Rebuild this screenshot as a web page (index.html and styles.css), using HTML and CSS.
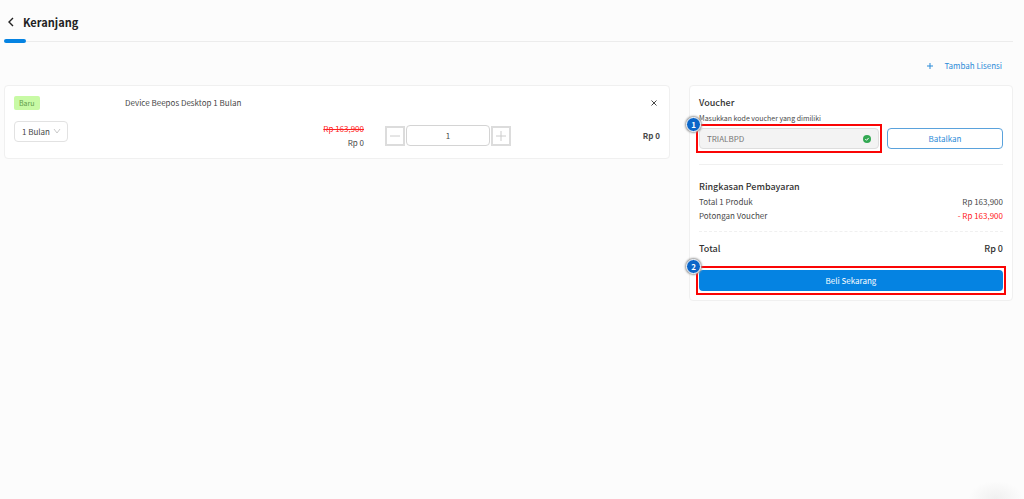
FILE: index.html
```html
<!DOCTYPE html>
<html lang="id">
<head>
<meta charset="utf-8">
<meta name="viewport" content="width=device-width, initial-scale=1">
<title>Keranjang</title>
<link rel="stylesheet" href="styles.css">
</head>
<body>
<header class="header">
  <button class="back" type="button" aria-label="Kembali"><svg viewBox="0 0 8 10" width="8" height="10"><path d="M6 1 2 5l4 4"/></svg></button>
  <h1 class="title">Keranjang</h1>
</header>
<main>
  <div class="toolbar">
    <a class="add-link" href="#"><svg viewBox="0 0 8 8" width="8" height="8"><path d="M4 1v6M1 4h6"/></svg><span>Tambah Lisensi</span></a>
  </div>
  <div class="layout">
    <section class="card item">
      <div class="item-top">
        <div><span class="tag">Baru</span></div>
        <span class="name">Device Beepos Desktop 1 Bulan</span>
        <button class="remove" type="button" aria-label="Hapus"><svg viewBox="0 0 8 8" width="8" height="8"><path d="M1.500 1.500l5 5M6.500 1.500l-5 5"/></svg></button>
      </div>
      <div class="item-bottom">
        <div class="select">
          <select aria-label="Durasi"><option>1 Bulan</option></select>
          <svg class="chevron" viewBox="0 0 8 6" width="8" height="6"><path d="M1 1l3 4 3-4"/></svg>
        </div>
        <div class="prices"><del>Rp 163,900</del><span>Rp 0</span></div>
        <div class="qty">
          <button type="button" aria-label="Kurangi"><svg viewBox="0 0 12 12" width="12" height="12"><path d="M1 6h10"/></svg></button>
          <input type="text" value="1" aria-label="Jumlah">
          <button type="button" aria-label="Tambah"><svg viewBox="0 0 12 12" width="12" height="12"><path d="M1 6h10M6 1v10"/></svg></button>
        </div>
        <strong class="subtotal">Rp 0</strong>
      </div>
    </section>
    <aside class="card summary">
      <h2>Voucher</h2>
      <label class="hint" for="voucher">Masukkan kode voucher yang dimiliki</label>
      <div class="voucher">
        <div class="field">
          <input id="voucher" type="text" value="TRIALBPD" readonly>
          <svg class="check" viewBox="0 0 8 8" width="8" height="8"><circle cx="4" cy="4" r="4"/><path d="M2.300 4.100l1.200 1.200 2.200-2.400"/></svg>
          <span class="mark"><span class="pin">1</span></span>
        </div>
        <button class="cancel" type="button">Batalkan</button>
      </div>
      <hr>
      <h2>Ringkasan Pembayaran</h2>
      <div class="row"><span>Total 1 Produk</span><span>Rp 163,900</span></div>
      <div class="row"><span>Potongan Voucher</span><span class="minus">- Rp 163,900</span></div>
      <hr class="dashed">
      <div class="row total"><span>Total</span><span>Rp 0</span></div>
      <div class="buy-wrap">
        <button class="buy" type="button">Beli Sekarang</button>
        <span class="mark"><span class="pin">2</span></span>
      </div>
    </aside>
  </div>
</main>
<div class="glow"></div>
</body>
</html>
```
FILE: styles.css
```css
* { box-sizing: border-box; }
body {
  margin: 0;
  padding: 0 11px 0 4px;
  min-height: 100vh;
  position: relative;
  overflow-x: hidden;
  background: #fcfcfc;
  color: #484848;
  font: 8px/14px "Noto Sans CJK SC", "Noto Sans", sans-serif;
}
h1, h2 { margin: 0; }
button, input, select { font: inherit; color: inherit; margin: 0; }
button { padding: 0; border: 0; background: none; cursor: pointer; }
svg { display: block; fill: none; stroke: currentColor; }

.header {
  display: flex;
  align-items: center;
  gap: 8px;
  height: 42px;
  padding: 3px 0 0 3px;
  border-bottom: 1px solid #ececec;
  position: relative;
  color: #222;
}
.header::after {
  content: "";
  position: absolute;
  left: 0;
  bottom: -2px;
  width: 22px;
  height: 4px;
  border-radius: 2px;
  background: #0583e2;
}
.back svg { stroke-width: 1.4; }
.title { font-size: 11px; line-height: 16px; font-weight: 700; }

.toolbar {
  display: flex;
  justify-content: flex-end;
  padding: 17px 11px 12px 0;
}
.add-link {
  display: flex;
  align-items: center;
  gap: 10px;
  color: #2b8bd8;
  text-decoration: none;
}

.layout {
  display: grid;
  grid-template-columns: 666fr 324fr;
  gap: 19px;
  align-items: start;
}
.card {
  background: #fff;
  border: 1px solid #f0f0f0;
  border-radius: 4px;
  padding: 9px;
}

.item { padding-top: 10px; padding-bottom: 8px; }
.item-top, .item-bottom { display: grid; align-items: center; }
.item-top { grid-template-columns: 111fr 523fr 12px; }
.tag {
  display: inline-block;
  padding: 0 5px;
  border-radius: 2px;
  background: #c8faa5;
  color: #619b4b;
  font-size: 7px;
}
.remove { display: grid; place-items: center; }
.item-bottom { grid-template-columns: 111fr 260fr 126fr 149fr; margin-top: 11px; }
.select { position: relative; width: 54px; margin-bottom: 8px; }
.select select {
  appearance: none;
  display: block;
  width: 100%;
  height: 21px;
  padding: 0 7px;
  border: 1px solid #e2e2e2;
  border-radius: 4px;
  background: #fff;
}
.chevron { position: absolute; right: 7px; top: 7px; color: #bbb; stroke-width: 0.8; pointer-events: none; }
.prices { display: flex; flex-direction: column; align-items: flex-end; padding-right: 21px; }
.prices del { color: #f22; }
.qty { display: flex; align-items: center; gap: 1px; min-width: 0; }
.qty button {
  display: grid;
  place-items: center;
  flex: none;
  width: 20px;
  height: 20px;
  border: 2px solid #dcdcdc;
  color: #ccc;
}
.qty input {
  flex: 1;
  width: 0;
  min-width: 0;
  height: 21px;
  border: 1px solid #d4d4d4;
  border-radius: 4px;
  background: #fff;
  text-align: center;
}
.subtotal { text-align: right; }

h2 { font-size: 9px; line-height: 16px; font-weight: 500; color: #333; }
.hint { display: block; font-size: 7px; line-height: 14px; }
.voucher { display: grid; grid-template-columns: 180fr 116fr; gap: 8px; margin-top: 3px; }
.field, .buy-wrap { position: relative; }
.field input {
  display: block;
  width: 100%;
  height: 21px;
  padding: 0 20px 0 7px;
  border: 1px solid #dedede;
  border-radius: 4px;
  background: #f3f3f3;
  color: #777;
}
.check { position: absolute; right: 8px; top: 7px; stroke: none; }
.check circle { fill: #32a852; }
.check path { stroke: #fff; }
.mark { position: absolute; inset: -4px -3px; border: 2px solid #fa0505; pointer-events: none; }
.pin {
  position: absolute;
  left: -12px;
  top: -9px;
  width: 15px;
  height: 15px;
  border: 1px solid #fff;
  border-radius: 50%;
  background: #0b66c8;
  box-shadow: 0 0 2px 1px #999;
  color: #fff;
  font-weight: 700;
  line-height: 13px;
  text-align: center;
}
.cancel { height: 21px; border: 1px solid #5aa2dc; border-radius: 4px; background: #fff; color: #2b8bd8; }
hr { height: 0; margin: 15px 0 14px; border: 0; border-top: 1px solid #f0f0f0; }
hr.dashed { margin: 8px 0 9px; border-top-style: dashed; }
.row { display: flex; justify-content: space-between; }
.row .minus { color: #f22; }
.row.total { font-size: 9px; line-height: 16px; font-weight: 500; color: #333; }
.buy-wrap { margin-top: 13px; }
.buy { display: block; width: 100%; height: 21px; border-radius: 4px; background: #0583e2; color: #fff; }

.glow {
  position: absolute;
  right: 0;
  bottom: 0;
  width: 56px;
  height: 18px;
  background: radial-gradient(ellipse at bottom, #f0f0f0, #fcfcfc 70%);
}
```
